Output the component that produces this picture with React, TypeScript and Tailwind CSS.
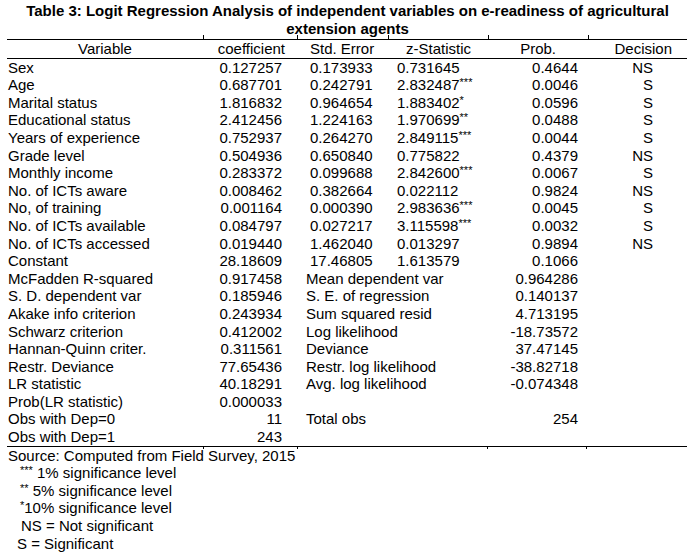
import React from "react";

type Row = {
  v: string;
  c: string;
  se: string;
  z: string;
  star?: string;
  p: string;
  d: string;
};

const rows: Row[] = [
  { v: "Sex", c: "0.127257", se: "0.173933", z: "0.731645", p: "0.4644", d: "NS" },
  { v: "Age", c: "0.687701", se: "0.242791", z: "2.832487", star: "***", p: "0.0046", d: "S" },
  { v: "Marital status", c: "1.816832", se: "0.964654", z: "1.883402", star: "*", p: "0.0596", d: "S" },
  { v: "Educational status", c: "2.412456", se: "1.224163", z: "1.970699", star: "**", p: "0.0488", d: "S" },
  { v: "Years of experience", c: "0.752937", se: "0.264270", z: "2.849115", star: "***", p: "0.0044", d: "S" },
  { v: "Grade level", c: "0.504936", se: "0.650840", z: "0.775822", p: "0.4379", d: "NS" },
  { v: "Monthly income", c: "0.283372", se: "0.099688", z: "2.842600", star: "***", p: "0.0067", d: "S" },
  { v: "No. of ICTs aware", c: "0.008462", se: "0.382664", z: "0.022112", p: "0.9824", d: "NS" },
  { v: "No, of training", c: "0.001164", se: "0.000390", z: "2.983636", star: "***", p: "0.0045", d: "S" },
  { v: "No. of ICTs available", c: "0.084797", se: "0.027217", z: "3.115598", star: "***", p: "0.0032", d: "S" },
  { v: "No. of ICTs accessed", c: "0.019440", se: "1.462040", z: "0.013297", p: "0.9894", d: "NS" },
  { v: "Constant", c: "28.18609", se: "17.46805", z: "1.613579", p: "0.1066", d: "" },
];

const stats: [string, string, string, string][] = [
  ["McFadden R-squared", "0.917458", "Mean dependent var", "0.964286"],
  ["S. D. dependent var", "0.185946", "S. E. of regression", "0.140137"],
  ["Akake info criterion", "0.243934", "Sum squared resid", "4.713195"],
  ["Schwarz criterion", "0.412002", "Log likelihood", "-18.73572"],
  ["Hannan-Quinn criter.", "0.311561", "Deviance", "37.47145"],
  ["Restr. Deviance", "77.65436", "Restr. log likelihood", "-38.82718"],
  ["LR statistic", "40.18291", "Avg. log likelihood", "-0.074348"],
  ["Prob(LR statistic)", "0.000033", "", ""],
  ["Obs with Dep=0", "11", "Total obs", "254"],
  ["Obs with Dep=1", "243", "", ""],
];

const grid = "grid grid-cols-[196px_94px_91px_100px_100px_99px] h-[17.6px] leading-[17.6px]";

function Stars({ s }: { s: string }) {
  return <sup className="text-[11px] relative top-[-4px]">{s}</sup>;
}

export default function App() {
  return (
    <div
      className="w-[687px] h-[552px] bg-white text-black text-[15px] overflow-hidden"
      style={{ fontFamily: '"Liberation Sans", Arial, sans-serif' }}
    >
      {/* Title */}
      <div className="pt-[2px] text-center font-bold text-[15px] leading-[18px] pl-[8px]">
        <div className="whitespace-nowrap">
          Table 3: Logit Regression Analysis of independent variables on e-readiness of agricultural
        </div>
        <div>extension agents</div>
      </div>

      {/* Table */}
      <div className="ml-[7px] w-[680px] mt-[1px]">
        <div className="relative border-t-[1.5px] border-b-[1.5px] border-black">
          <div className={grid}>
            <div className="text-center">Variable</div>
            <div className="text-right pr-[12px]">coefficient</div>
            <div className="pl-[13px]">Std. Error</div>
            <div className="pl-[18px]">z-Statistic</div>
            <div className="text-right pr-[32px]">Prob.</div>
            <div className="text-right pr-[15px]">Decision</div>
          </div>
          {/* column ticks */}
          <span className="absolute top-[-5px] left-[196px] w-px h-[4px] bg-black" />
          <span className="absolute top-[-5px] left-[290px] w-px h-[4px] bg-black" />
          <span className="absolute top-[-5px] left-[381px] w-px h-[4px] bg-black" />
          <span className="absolute top-[-5px] left-[481px] w-px h-[4px] bg-black" />
          <span className="absolute top-[-5px] left-[581px] w-px h-[4px] bg-black" />
        </div>

        <div className="relative border-b-[1.5px] border-black">
          {rows.map((r) => (
            <div key={r.v} className={grid}>
              <div className="pl-[1px] whitespace-nowrap">{r.v}</div>
              <div className="text-right pr-[15px]">{r.c}</div>
              <div className="pl-[13px]">{r.se}</div>
              <div className="pl-[9px] whitespace-nowrap">
                {r.z}
                {r.star && <Stars s={r.star} />}
              </div>
              <div className="text-right pr-[10px]">{r.p}</div>
              <div className="text-right pr-[34px]">{r.d}</div>
            </div>
          ))}
          {stats.map((s) => (
            <div key={s[0]} className={grid}>
              <div className="pl-[1px] whitespace-nowrap">{s[0]}</div>
              <div className="text-right pr-[15px]">{s[1]}</div>
              <div className="col-span-2 pl-[9px] whitespace-nowrap">{s[2]}</div>
              <div className="text-right pr-[10px]">{s[3]}</div>
              <div />
            </div>
          ))}
          <span className="absolute bottom-[-3px] left-[196px] w-px h-[3px] bg-black" />
          <span className="absolute bottom-[-3px] left-[290px] w-px h-[3px] bg-black" />
          <span className="absolute bottom-[-3px] left-[480px] w-px h-[3px] bg-black" />
          <span className="absolute bottom-[-3px] left-[579px] w-px h-[3px] bg-black" />
        </div>
      </div>

      {/* Notes */}
      <div className="pl-[8px] leading-[17.6px]">
        <div>Source: Computed from Field Survey, 2015</div>
        <div className="pl-[12px]">
          <Stars s="***" /> 1% significance level
        </div>
        <div className="pl-[12px]">
          <Stars s="**" /> 5% significance level
        </div>
        <div className="pl-[12px]">
          <Stars s="*" />10% significance level
        </div>
        <div className="pl-[13px]">NS = Not significant</div>
        <div className="pl-[9px]">S = Significant</div>
      </div>
    </div>
  );
}
